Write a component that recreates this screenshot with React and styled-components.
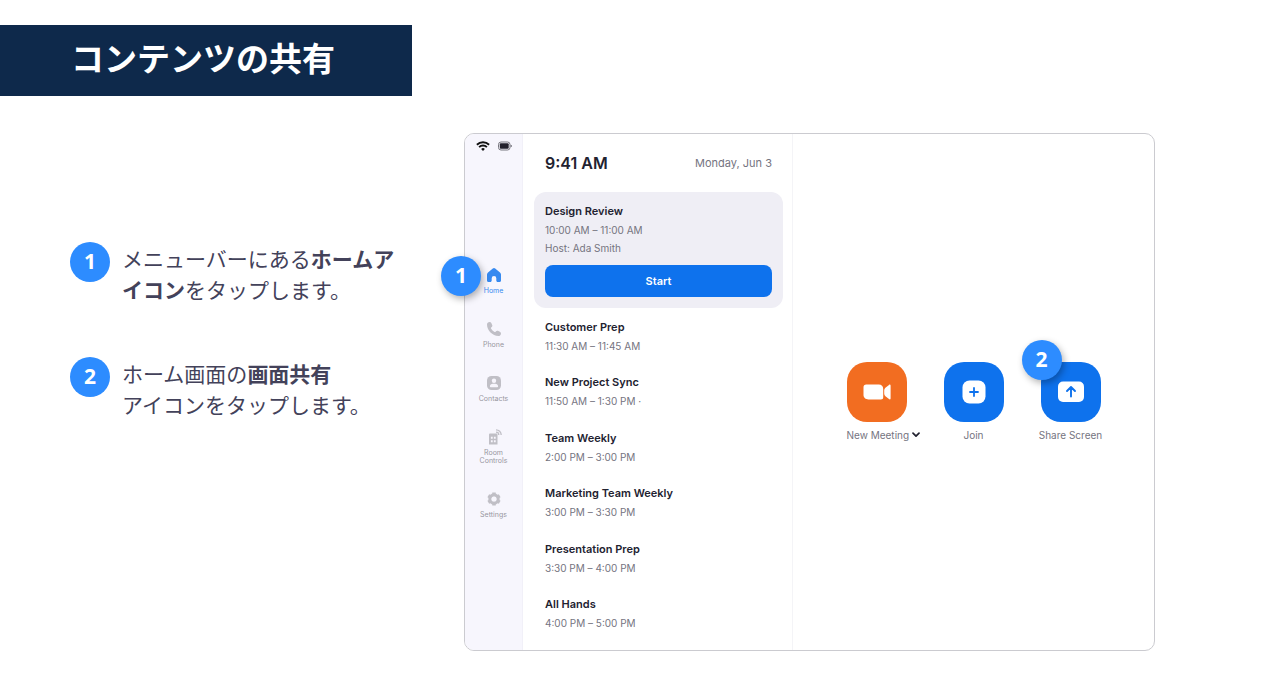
import styled, { createGlobalStyle } from "styled-components";

const steps = [
  {
    id: 1,
    content: (
      <>
        メニューバーにある<strong>ホームアイコン</strong>をタップします。
      </>
    ),
  },
  {
    id: 2,
    content: (
      <>
        ホーム画面の<strong>画面共有</strong>
        <br />
        アイコンをタップします。
      </>
    ),
  },
];

const meetings = [
  { id: 1, title: "Customer Prep", time: "11:30 AM – 11:45 AM" },
  { id: 2, title: "New Project Sync", time: "11:50 AM – 1:30 PM ·" },
  { id: 3, title: "Team Weekly", time: "2:00 PM – 3:00 PM" },
  { id: 4, title: "Marketing Team Weekly", time: "3:00 PM – 3:30 PM" },
  { id: 5, title: "Presentation Prep", time: "3:30 PM – 4:00 PM" },
  { id: 6, title: "All Hands", time: "4:00 PM – 5:00 PM" },
];

const HomeIcon = () => (
  <svg width="16" height="16" viewBox="0 0 16 16" fill="currentColor">
    <path d="M6.800 1.500a1.900 1.900 0 0 1 2.400 0l4.800 3.900c.6.500 1 1.200 1 2v6.100c0 .9-.6 1.500-1.500 1.500h-1.700c-.9 0-1.500-.6-1.500-1.500v-2.200a2.300 2.300 0 0 0-4.600 0v2.200c0 .9-.6 1.500-1.500 1.500H2.500c-.9 0-1.500-.6-1.500-1.500V7.400c0-.8.4-1.500 1-2z" />
  </svg>
);

const PhoneIcon = () => (
  <svg width="16" height="16" viewBox="0 0 16 16" fill="currentColor">
    <path d="M1 3.600C1 2.100 2.100 1 3.600 1c.8 0 1.400.4 1.700 1.100l.9 2c.3.700.2 1.400-.4 1.900l-.7.600c-.3.300-.3.600-.1.900.8 1.400 2 2.600 3.500 3.500.3.200.6.100.9-.1l.6-.7c.5-.6 1.200-.7 1.900-.4l2 .9c.7.300 1.100.9 1.100 1.700 0 1.500-1.100 2.600-2.600 2.600C6.500 15 1 9.500 1 3.600z" />
  </svg>
);

const ContactsIcon = () => (
  <svg width="16" height="16" viewBox="0 0 16 16">
    <rect x="1" y="1" width="14" height="14" rx="4.500" fill="currentColor" />
    <circle cx="8" cy="5.700" r="2.200" fill="#f7f6fd" />
    <path d="M3.900 11.500c0-1.700 1.300-2.700 2.900-2.700h2.400c1.600 0 2.900 1 2.900 2.700 0 .5-.3.800-.8.800H4.700c-.5 0-.8-.3-.8-.8z" fill="#f7f6fd" />
  </svg>
);

const RoomIcon = () => (
  <svg width="16" height="16" viewBox="0 0 16 16" fill="none">
    <path d="M4.300 4.500h5.900c.8 0 1.300.5 1.300 1.300v9.700H3V5.800c0-.8.5-1.300 1.300-1.300z" fill="currentColor" />
    <path d="M4.900 7.800h1.800v2H4.900zM7.900 7.800h1.800v2H7.900zM4.900 11.200h1.800v2H4.900zM7.900 11.200h1.800v2H7.900z" fill="#f7f6fd" />
    <path
      d="M10 .8c2.900 0 5.200 2.300 5.200 5.200M10 3.200c1.500 0 2.800 1.300 2.800 2.800"
      stroke="currentColor"
      strokeWidth="1.300"
    />
  </svg>
);

const SettingsIcon = () => (
  <svg width="16" height="16" viewBox="0 0 16 16" fill="none">
    <circle cx="8" cy="8" r="4.200" stroke="currentColor" strokeWidth="3" />
    <path
      d="M8 3.500v-1M8 13.500v-1M4.100 5.750l-.87-.5M12.770 10.750l-.87-.5M4.100 10.250l-.87.5M12.770 5.250l-.87.500"
      stroke="currentColor"
      strokeWidth="4"
      strokeLinecap="square"
      strokeLinejoin="round"
      transform="translate(8 8) scale(.88) translate(-8 -8)"
    />
    <circle cx="8" cy="8" r="2.600" fill="#f7f6fd" />
  </svg>
);

const WifiIcon = () => (
  <svg width="14" height="10" viewBox="0 0 14 10" fill="none" stroke="#111" strokeWidth="1.900">
    <path d="M.9 3.700a8.700 8.700 0 0 1 12.200 0M3.100 6.100a5.500 5.500 0 0 1 7.800 0" />
    <path d="M7 9.900 5.100 8a2.700 2.700 0 0 1 3.800 0z" fill="#111" stroke="none" />
  </svg>
);

const BatteryIcon = () => (
  <svg width="14" height="10" viewBox="0 0 14 10">
    <rect x=".5" y="1" width="11.500" height="8" rx="2.500" fill="none" stroke="#77767e" />
    <rect x="1.800" y="2.300" width="8.900" height="5.400" rx="1" fill="#22212c" />
    <path d="M12.800 3.700c.6.200.9.700.9 1.300s-.3 1.100-.9 1.300z" fill="#33323c" />
  </svg>
);

const VideoIcon = () => (
  <svg width="28" height="16" viewBox="0 0 28 16" fill="#fff">
    <path d="M3.200.5h12.600c2.700 0 4.400 1.700 4.400 4.400v8.400c0 1.400-.8 2.200-2.200 2.200H5.400C2.700 15.500.5 13.800.5 11.100V3.200C.5 1.500 1.500.5 3.200.5z" />
    <path d="M21.200 6.300c0-1 .4-1.800 1.200-2.500l3.600-2.900c.8-.7 1.600-.3 1.600.7v12.800c0 1-.8 1.400-1.600.7l-3.600-2.900c-.8-.7-1.200-1.500-1.200-2.500z" />
  </svg>
);

const JoinIcon = () => (
  <svg width="24" height="24" viewBox="0 0 24 24">
    <rect x=".5" y=".5" width="23" height="23" rx="7" fill="#fff" />
    <path d="M12 8v8M8 12h8" stroke="#0e72ed" strokeWidth="1.800" strokeLinecap="round" />
  </svg>
);

const ShareIcon = () => (
  <svg width="26" height="22" viewBox="0 0 26 22">
    <rect y=".5" width="26" height="20.500" rx="5" fill="#fff" />
    <path
      d="M13 15.500V6.500M9 10l4-4 4 4"
      fill="none"
      stroke="#0e72ed"
      strokeWidth="1.900"
      strokeLinecap="round"
      strokeLinejoin="round"
    />
  </svg>
);

const ChevronIcon = () => (
  <svg width="8" height="6" viewBox="0 0 8 6" fill="none">
    <path d="m1 1.200 3 3 3-3" stroke="#222230" strokeWidth="1.700" strokeLinecap="round" strokeLinejoin="round" />
  </svg>
);

const navItems = [
  { id: 1, label: "Home", icon: <HomeIcon />, active: true, marker: 1 },
  { id: 2, label: "Phone", icon: <PhoneIcon /> },
  { id: 3, label: "Contacts", icon: <ContactsIcon /> },
  { id: 4, label: "Room Controls", icon: <RoomIcon /> },
  { id: 5, label: "Settings", icon: <SettingsIcon /> },
];

const actions = [
  { id: 1, label: "New Meeting", icon: <VideoIcon />, color: "#f26d21", menu: true },
  { id: 2, label: "Join", icon: <JoinIcon />, color: "#0e72ed" },
  { id: 3, label: "Share Screen", icon: <ShareIcon />, color: "#0e72ed", marker: 2 },
];

const Sidebar = () => {
  return (
    <SidebarWrapper>
      <StatusBar>
        <WifiIcon />
        <BatteryIcon />
      </StatusBar>
      <Nav>
        {navItems.map(({ id, label, icon, active, marker }) => (
          <NavButton key={id} type="button" $active={active}>
            {icon}
            <NavLabel $active={active}>{label}</NavLabel>
            {marker && <NavMarker>{marker}</NavMarker>}
          </NavButton>
        ))}
      </Nav>
    </SidebarWrapper>
  );
};

const Schedule = () => {
  return (
    <ScheduleWrapper>
      <Clock>
        <h2>9:41 AM</h2>
        <p>Monday, Jun 3</p>
      </Clock>
      <NextMeeting>
        <MeetingTitle>Design Review</MeetingTitle>
        <MeetingText>10:00 AM – 11:00 AM</MeetingText>
        <MeetingText>Host: Ada Smith</MeetingText>
        <StartButton type="button">Start</StartButton>
      </NextMeeting>
      <MeetingList>
        {meetings.map(({ id, title, time }) => (
          <li key={id}>
            <MeetingTitle>{title}</MeetingTitle>
            <MeetingText>{time}</MeetingText>
          </li>
        ))}
      </MeetingList>
    </ScheduleWrapper>
  );
};

const Actions = () => {
  return (
    <ActionsWrapper>
      {actions.map(({ id, label, icon, color, menu, marker }) => (
        <Action key={id} type="button">
          <Tile $color={color}>
            {icon}
            {marker && <TileMarker>{marker}</TileMarker>}
          </Tile>
          <ActionLabel $wide={menu}>
            {label}
            {menu && <ChevronIcon />}
          </ActionLabel>
        </Action>
      ))}
    </ActionsWrapper>
  );
};

const App = () => {
  return (
    <Page>
      <GlobalStyle />
      <Banner>
        <h1>コンテンツの共有</h1>
      </Banner>
      <Main>
        <Steps>
          {steps.map(({ id, content }) => (
            <Step key={id}>
              <Badge>{id}</Badge>
              <p>{content}</p>
            </Step>
          ))}
        </Steps>
        <Device>
          <Sidebar />
          <Schedule />
          <Actions />
        </Device>
      </Main>
    </Page>
  );
};
export default App;

const GlobalStyle = createGlobalStyle`
*{
    box-sizing:border-box;
    margin:0;
    padding:0;
}
body{
    background:#fff;
    font-family:"Open Sans","Noto Sans CJK JP",sans-serif;
}
ul,ol{
    list-style:none;
}
button{
    border:none;
    background:none;
    font-family:inherit;
    cursor:pointer;
}
svg{
    display:block;
    flex-shrink:0;
}
`;

const Page = styled.div`
  padding: 25px 0 29px;
`;

const Banner = styled.header`
  width: 412px;
  padding: 8px 0 15px 71px;
  background: #0e294b;
  h1 {
    color: #fff;
    font-family: "Noto Sans CJK JP", sans-serif;
    font-size: 33px;
    font-weight: 700;
    line-height: 48px;
  }
`;

const Main = styled.main`
  display: grid;
  grid-template-columns: 394px minmax(600px, 1fr);
  padding: 37px 112px 0 70px;
`;

const Steps = styled.ol`
  display: flex;
  flex-direction: column;
  gap: 52px;
  padding: 109px 52px 0 0;
`;

const Step = styled.li`
  display: flex;
  gap: 12px;
  p {
    flex: 1;
    padding-top: 1px;
    color: #43425a;
    font-family: "Noto Sans CJK JP", sans-serif;
    font-size: 21px;
    line-height: 31px;
  }
`;

const Badge = styled.span`
  display: flex;
  align-items: center;
  justify-content: center;
  flex-shrink: 0;
  width: 40px;
  height: 40px;
  padding-bottom: 2px;
  border-radius: 50%;
  background: #2d8cff;
  color: #fff;
  font-family: "Open Sans", sans-serif;
  font-size: 21px;
  font-weight: 700;
  line-height: 24px;
`;

const NavMarker = styled(Badge)`
  position: absolute;
  top: -11px;
  left: -24px;
  box-shadow: 2px 3px 7px rgba(0, 0, 0, 0.3);
`;

const TileMarker = styled(Badge)`
  position: absolute;
  top: -22px;
  left: -19px;
  box-shadow: 2px 3px 7px rgba(0, 0, 0, 0.3);
`;

const Device = styled.section`
  display: grid;
  grid-template-columns: 58px 270px 1fr;
  min-height: 518px;
  border: 1px solid #cbcbd0;
  border-radius: 10px;
  font-family: Inter, sans-serif;
`;

const SidebarWrapper = styled.aside`
  border-right: 1px solid #f1f0f8;
  border-radius: 9px 0 0 9px;
  background: #f7f6fd;
`;

const StatusBar = styled.div`
  display: flex;
  justify-content: center;
  gap: 8px;
  padding-top: 7px;
`;

const Nav = styled.nav`
  display: flex;
  flex-direction: column;
  gap: 26px;
  padding-top: 116px;
`;

const NavButton = styled.button`
  position: relative;
  display: flex;
  flex-direction: column;
  align-items: center;
  gap: 4px;
  color: ${({ $active }) => ($active ? "#378af0" : "#c0bfc6")};
`;

const NavLabel = styled.span`
  max-width: 40px;
  color: ${({ $active }) => ($active ? "#378af0" : "#98979f")};
  font-size: 7px;
  line-height: 8px;
`;

const ScheduleWrapper = styled.div`
  display: flex;
  flex-direction: column;
  padding: 18px 9px 18px 11px;
  border-right: 1px solid #f4f4f7;
`;

const Clock = styled.header`
  display: flex;
  align-items: center;
  justify-content: space-between;
  padding: 0 11px;
  h2 {
    color: #222230;
    font-size: 16px;
    font-weight: 600;
    line-height: 22px;
  }
  p {
    color: #75747f;
    font-size: 11px;
    line-height: 22px;
  }
`;

const NextMeeting = styled.article`
  margin-top: 18px;
  padding: 11px;
  border-radius: 12px;
  background: #efeef5;
`;

const MeetingTitle = styled.h3`
  color: #222230;
  font-size: 11px;
  font-weight: 600;
  line-height: 16px;
`;

const MeetingText = styled.p`
  margin-top: 4px;
  color: #75747f;
  font-size: 10px;
  line-height: 14px;
`;

const StartButton = styled.button`
  width: 100%;
  margin-top: 10px;
  border-radius: 8px;
  background: #0e72ed;
  color: #fff;
  font-size: 11px;
  font-weight: 600;
  line-height: 32px;
`;

const MeetingList = styled.ul`
  display: flex;
  flex: 1;
  flex-direction: column;
  justify-content: space-between;
  padding: 11px 11px 2px;
`;

const ActionsWrapper = styled.div`
  display: flex;
  align-items: center;
  justify-content: center;
  gap: 37px;
  padding-top: 20px;
`;

const Action = styled.button`
  width: 60px;
`;

const Tile = styled.span`
  position: relative;
  display: flex;
  align-items: center;
  justify-content: center;
  height: 60px;
  border-radius: 20px;
  background: ${({ $color }) => $color};
`;

const ActionLabel = styled.span`
  display: flex;
  align-items: center;
  justify-content: ${({ $wide }) => ($wide ? "flex-start" : "center")};
  gap: 3px;
  margin-top: 6px;
  color: #75747f;
  font-size: 10px;
  line-height: 14px;
  white-space: nowrap;
`;
